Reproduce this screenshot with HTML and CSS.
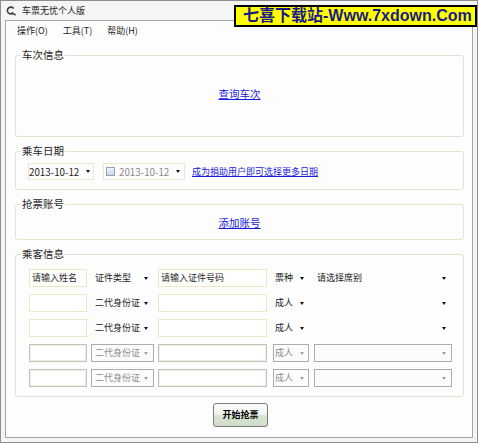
FILE: index.html
```html
<!DOCTYPE html>
<html lang="zh-CN">
<head>
<meta charset="utf-8">
<title>车票无忧个人版</title>
<link rel="stylesheet" href="styles.css">
</head>
<body>
<div class="window">
  <div class="titlebar">
    <svg class="app-icon" width="10" height="10" viewBox="0 0 10 10">
      <path d="M7.6 2.6 A3.4 3.4 0 1 0 7.2 6.9" fill="none" stroke="#3c3c3c" stroke-width="1.6"/>
      <path d="M5.8 6.6 L9.6 9.2" fill="none" stroke="#3c3c3c" stroke-width="1.6"/>
    </svg>
    <span class="title">车票无忧个人版</span>
  </div>
  <div class="watermark">七喜下载站-Www.7xdown.Com</div>
  <div class="client">
    <nav class="menubar">
      <span>操作(O)</span>
      <span>工具(T)</span>
      <span>帮助(H)</span>
    </nav>

    <fieldset class="group g-train">
      <legend>车次信息</legend>
      <div class="center-body train-body"><a class="big-link" href="#">查询车次</a></div>
    </fieldset>

    <fieldset class="group g-date">
      <legend>乘车日期</legend>
      <div class="date-body">
        <div class="picker picker-main"><span>2013-10-12</span><i class="arrow"></i></div>
        <div class="picker picker-off"><span class="check"></span><span class="picker-text">2013-10-12</span><i class="arrow"></i></div>
        <a class="small-link" href="#">成为捐助用户即可选择更多日期</a>
      </div>
    </fieldset>

    <fieldset class="group g-account">
      <legend>抢票账号</legend>
      <div class="center-body account-body"><a class="big-link" href="#">添加账号</a></div>
    </fieldset>

    <fieldset class="group g-passenger">
      <legend>乘客信息</legend>
      <div class="rows">
        <div class="prow">
          <div class="field f-name">请输入姓名</div>
          <div class="combo c-type"><span>证件类型</span><i class="arrow"></i></div>
          <div class="field f-id">请输入证件号码</div>
          <div class="combo c-kind"><span>票种</span><i class="arrow"></i></div>
          <div class="combo c-seat"><span>请选择席别</span><i class="arrow"></i></div>
        </div>
        <div class="prow">
          <div class="field f-name"></div>
          <div class="combo c-type"><span>二代身份证</span><i class="arrow"></i></div>
          <div class="field f-id"></div>
          <div class="combo c-kind"><span>成人</span><i class="arrow"></i></div>
          <div class="combo c-seat"><span></span><i class="arrow"></i></div>
        </div>
        <div class="prow">
          <div class="field f-name"></div>
          <div class="combo c-type"><span>二代身份证</span><i class="arrow"></i></div>
          <div class="field f-id"></div>
          <div class="combo c-kind"><span>成人</span><i class="arrow"></i></div>
          <div class="combo c-seat"><span></span><i class="arrow"></i></div>
        </div>
        <div class="prow disabled">
          <div class="field f-name"></div>
          <div class="combo c-type"><span>二代身份证</span><i class="arrow"></i></div>
          <div class="field f-id"></div>
          <div class="combo c-kind"><span>成人</span><i class="arrow"></i></div>
          <div class="combo c-seat"><span></span><i class="arrow"></i></div>
        </div>
        <div class="prow disabled">
          <div class="field f-name"></div>
          <div class="combo c-type"><span>二代身份证</span><i class="arrow"></i></div>
          <div class="field f-id"></div>
          <div class="combo c-kind"><span>成人</span><i class="arrow"></i></div>
          <div class="combo c-seat"><span></span><i class="arrow"></i></div>
        </div>
      </div>
    </fieldset>

    <div class="actions">
      <button class="start-btn" type="button">开始抢票</button>
    </div>
  </div>
</div>
</body>
</html>
```

FILE: styles.css
```css
html, body {
  margin: 0;
  padding: 0;
  background: #ffffff;
}

body {
  font-family: "Noto Sans CJK SC", "Microsoft YaHei", sans-serif;
  font-size: 9px;
  color: #222222;
  width: 479px;
  height: 444px;
  overflow: hidden;
}

.window {
  position: relative;
  width: 478px;
  height: 443px;
  box-sizing: border-box;
  border: 1px solid #8e8e8e;
  background: #f5f5f5;
  padding: 0 4px 4px 4px;
  display: flex;
  flex-direction: column;
}

.titlebar {
  height: 19px;
  display: flex;
  align-items: center;
  padding-left: 1px;
  gap: 6px;
}

.app-icon {
  display: block;
  flex: none;
}

.title {
  font-size: 9px;
  line-height: 12px;
  color: #1e1e1e;
}

.watermark {
  position: absolute;
  top: 4px;
  left: 233px;
  width: 243px;
  height: 22px;
  box-sizing: border-box;
  border: 2px solid #000000;
  background: #ffff00;
  color: #1b1b86;
  font-family: "Liberation Sans", "Noto Sans CJK SC", sans-serif;
  font-weight: bold;
  font-size: 16px;
  line-height: 18px;
  padding-left: 7px;
  white-space: nowrap;
  overflow: hidden;
}

.client {
  flex: 1;
  border: 1px solid #a4a4a4;
  background: #fdfdfd;
  display: flex;
  flex-direction: column;
  min-height: 0;
}

.menubar {
  height: 20px;
  display: flex;
  align-items: center;
  gap: 15px;
  padding-left: 11px;
  line-height: 12px;
  color: #1e1e1e;
}

.group {
  margin: 7px 8px 0 9px;
  padding: 0;
  border: 1px solid #d8e6d2;
  border-radius: 3px;
  min-width: 0;
}

.group legend {
  margin-left: 5px;
  padding: 0 1px;
  font-size: 10.5px;
  line-height: 14px;
  color: #1e1e1e;
}

.g-train { border-color: #d6e6d0; }
.g-date { border-color: #dbe6d0; }
.g-account { border-color: #e8e6c8; }
.g-passenger { border-color: #dce5cf; }

.center-body {
  display: flex;
  justify-content: center;
}

.train-body {
  padding: 25px 0 35px;
}

.account-body {
  padding: 5px 0 9px;
}

.big-link {
  font-size: 10.5px;
  line-height: 14px;
  color: #1a1ae0;
  text-decoration: underline;
}

.small-link {
  font-size: 9px;
  line-height: 14px;
  color: #1a1ae0;
  text-decoration: underline;
  margin-left: 7px;
}

.date-body {
  display: flex;
  align-items: center;
  padding: 5px 0 9px 12px;
}

.picker {
  height: 17px;
  box-sizing: border-box;
  border: 1px solid #ece8d0;
  display: flex;
  align-items: center;
  justify-content: space-between;
  font-size: 9.8px;
  line-height: 14px;
}

.picker-main {
  width: 66px;
  padding: 0 3px 0 0;
  color: #1e1e1e;
}

.picker-off {
  width: 82px;
  margin-left: 9px;
  padding: 0 4px 0 2px;
  color: #8a8a8a;
}

.picker-text {
  flex: 1;
  margin-left: 4px;
}

.check {
  width: 9px;
  height: 9px;
  box-sizing: border-box;
  border: 1px solid #8fa2b8;
  background: linear-gradient(#eef3f8, #c9d6e4);
}

.arrow {
  display: block;
  width: 0;
  height: 0;
  border-top: 3px solid #111111;
  border-left: 2.5px solid transparent;
  border-right: 2.5px solid transparent;
  flex: none;
}

.rows {
  display: flex;
  flex-direction: column;
  gap: 7px;
  padding: 8px 0 9px 13px;
}

.prow {
  display: flex;
  height: 18px;
}

.field {
  height: 18px;
  box-sizing: border-box;
  border: 1px solid #efe6c4;
  background: #ffffff;
  padding-left: 2px;
  line-height: 16px;
  color: #2a2a2a;
  white-space: nowrap;
}

.combo {
  height: 18px;
  box-sizing: border-box;
  border: 1px solid transparent;
  display: flex;
  align-items: center;
  justify-content: space-between;
  line-height: 16px;
  color: #222222;
  white-space: nowrap;
}

.f-name { width: 58px; }
.c-type { width: 63px; margin-left: 4px; padding: 0 5px 0 3px; }
.f-id { width: 109px; margin-left: 4px; }
.c-kind { width: 36px; margin-left: 6px; padding: 0 4px 0 1px; }
.c-seat { width: 138px; margin-left: 5px; padding: 0 5px 0 2px; }

.disabled .field {
  border-color: #c3c3c3;
  box-shadow: inset 0 0 0 1px #eef0dc;
}

.disabled .combo {
  border-color: #acacac;
  background: #fcfcfc;
  color: #8c8c8c;
}

.disabled .arrow {
  border-top-color: #a0a0a0;
}

.actions {
  display: flex;
  justify-content: center;
  margin-top: 6px;
  padding-left: 3px;
}

.start-btn {
  width: 55px;
  height: 24px;
  box-sizing: border-box;
  border: 1px solid #7a7a7a;
  border-radius: 3px;
  background: linear-gradient(#fcfcfc 0%, #f2f2f2 48%, #d9e5d3 52%, #cfdcc8 100%);
  font-family: "Noto Sans CJK SC", "Microsoft YaHei", sans-serif;
  font-size: 9px;
  font-weight: bold;
  color: #000000;
  padding: 0;
  line-height: 12px;
}
```
